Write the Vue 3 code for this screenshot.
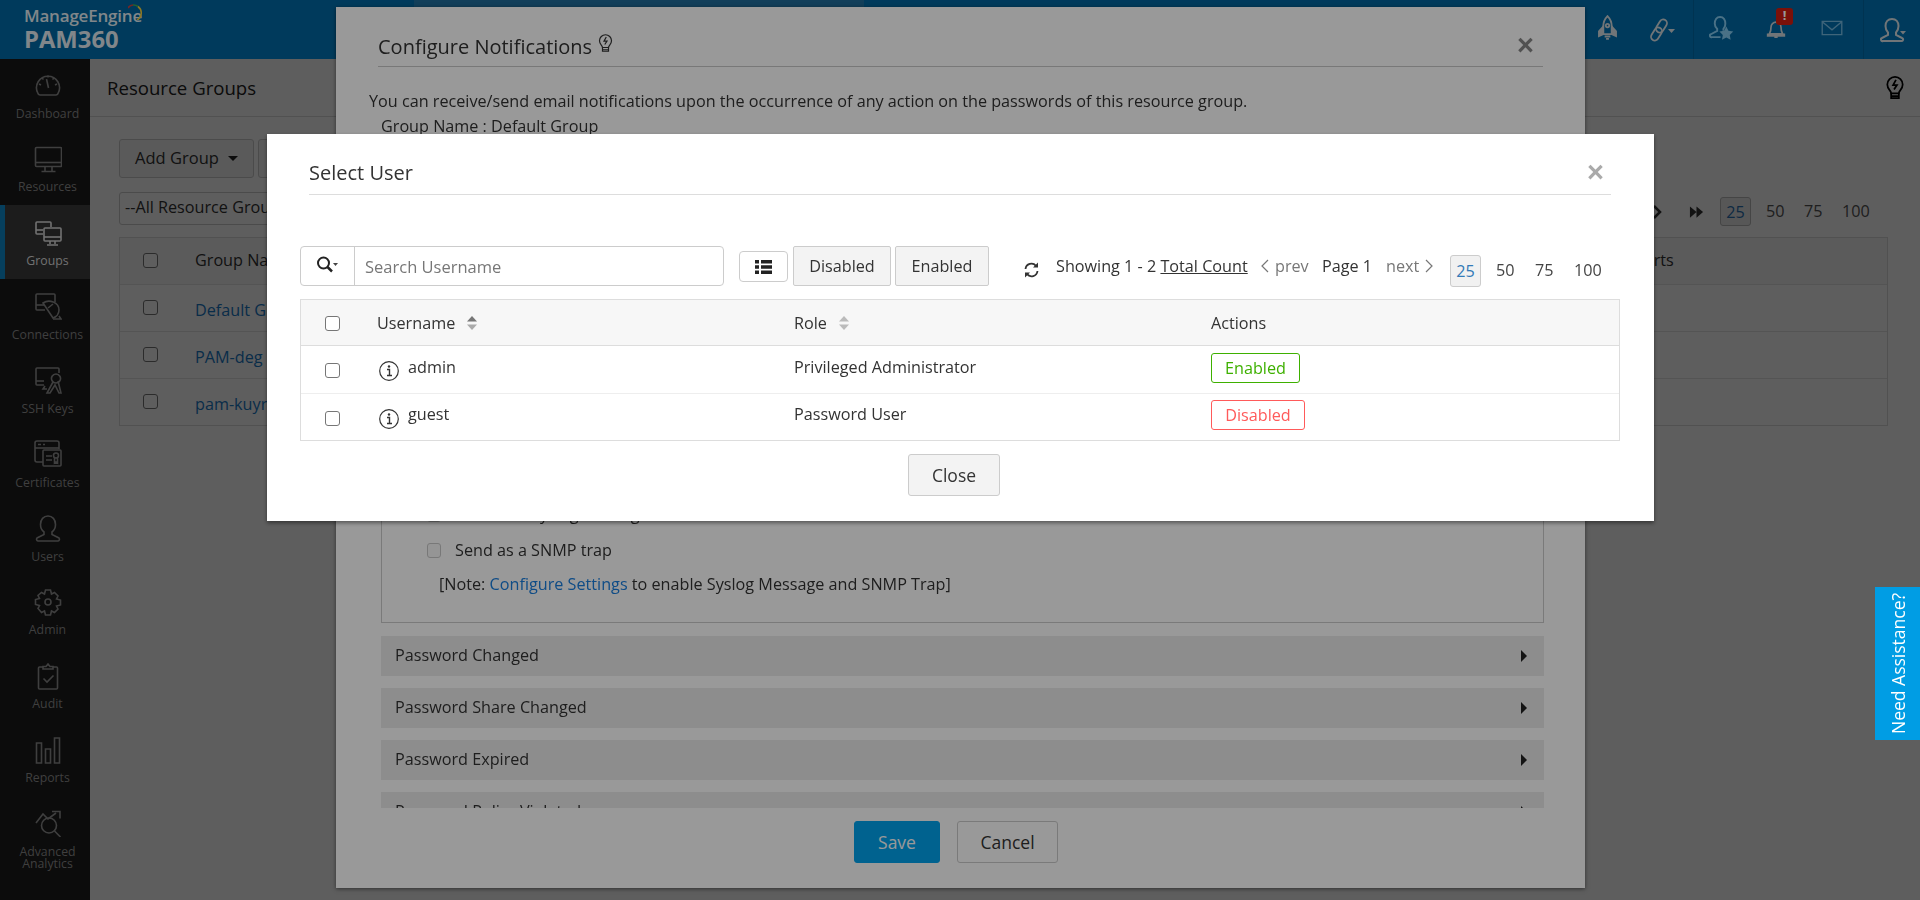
<script setup>
const nav = [
  { label: 'Dashboard', d: ['M6 24h16a2.5 2.5 0 0 0 2.2-2 A11.5 11.5 0 1 0 3.8 22 a2.5 2.5 0 0 0 2.2 2z', 'M12.5 8l2 9', 'M14 4.500v2M5 13l2 1M23 13l-2 1M8 7l1.500 1.500M20 7l-1.500 1.500'] },
  { label: 'Resources', d: ['M2.500 2.500h24a1 1 0 0 1 1 1v17a1 1 0 0 1-1 1h-24a1 1 0 0 1-1-1v-17a1 1 0 0 1 1-1z', 'M1.500 17.500h26', 'M11 22v4M18 22v4M7.500 26.500h14'] },
  { label: 'Groups', active: true, d: ['M9 15H3a1 1 0 0 1-1-1V4a1 1 0 0 1 1-1h13a1 1 0 0 1 1 1v4', 'M2 11h7', 'M11 9h15a1 1 0 0 1 1 1v11a1 1 0 0 1-1 1H11a1 1 0 0 1-1-1V10a1 1 0 0 1 1-1z', 'M10 18h17', 'M16 22v3M21 22v3M13 26h11'] },
  { label: 'Connections', d: ['M11 17H3a1 1 0 0 1-1-1V2a1 1 0 0 1 1-1h17a1 1 0 0 1 1 1v7', 'M2 12h8', 'M9 10C15 6 25 9 25 17 25 21 22 24 19 25z', 'M14 15l5-4', 'M19 26h8l-2-3'] },
  { label: 'SSH Keys', d: ['M10 19H3a1 1 0 0 1-1-1V3a1 1 0 0 1 1-1h21a1 1 0 0 1 1 1v4', 'M2 15h8', 'M11 20l-2 3h4', 'M22 8a4.500 4.500 0 1 1-.01 0z', 'M19 16l-6 11h3l5-8 4 8h2l-3-12'] },
  { label: 'Certificates', d: ['M9 22H3a2 2 0 0 1-2-2V3a2 2 0 0 1 2-2h20a2 2 0 0 1 2 2v6', 'M1 8h24', 'M4 4.500h3M9 4.500h2', 'M10 10h16a1 1 0 0 1 1 1v14a1 1 0 0 1-1 1H10a1 1 0 0 1-1-1V11a1 1 0 0 1 1-1z', 'M12 16h6M12 20h6', 'M22 13a2.500 2.500 0 1 1 0 5 2.500 2.500 0 0 1 0-5zM20.500 18v5l1.500-1 1.500 1v-5'] },
  { label: 'Users', d: ['M14 2c-4.500 0-7.500 3.500-7.500 8.500 0 3.500 1.500 6 3.500 7.500v2.500L3 24a1.800 1.800 0 0 0 1 3h20a1.800 1.800 0 0 0 1-3l-7-3.500V18c2-1.500 3.500-4 3.500-7.500C21.500 5.500 18.500 2 14 2z'] },
  { label: 'Admin', d: ['M11.500 2h5l1 4 3-1.500 3.500 3.500-1.500 3 4 1v5l-4 1 1.500 3-3.500 3.500-3-1.500-1 4h-5l-1-4-3 1.500L4 20.500l1.500-3-4-1v-5l4-1-1.500-3L7.500 4.500l3 1.500z', 'M14 11a3 3 0 1 1 0 6 3 3 0 0 1 0-6z'] },
  { label: 'Audit', d: ['M9 5H5.500a1 1 0 0 0-1 1v20a1 1 0 0 0 1 1h17a1 1 0 0 0 1-1V6a1 1 0 0 0-1-1H19', 'M9 7V4.500h3L14 2l2 2.500h3V7z', 'M9.500 16.500l3.500 3.500 6.500-6.500'] },
  { label: 'Reports', d: ['M2.500 7h5v20h-5z', 'M11.500 13h5v14h-5z', 'M20.500 2h5v25h-5z'] },
  { label: 'Advanced Analytics', d: ['M2 14l7-9 5 5 8-6', 'M18 2.500h8v7', 'M15 9a7.500 7.500 0 1 1 0 15 7.500 7.500 0 0 1 0-15z', 'M20.500 22l6 6'] },
]
const rows = ['Default Group', 'PAM-deg', 'pam-kuyruk']
const users = [
  { name: 'admin', role: 'Privileged Administrator', status: 'Enabled' },
  { name: 'guest', role: 'Password User', status: 'Disabled' },
]
const accordions = ['Password Changed', 'Password Share Changed', 'Password Expired', 'Password Policy Violated']
</script>

<template>
  <div class="app">
    <header class="topbar">
      <div class="logo">
        <div class="logo-me">ManageEngine</div>
        <div class="logo-pam">PAM360</div>
        <svg class="logo-arc" viewBox="0 0 16 16" fill="none" stroke-width="1.600">
          <path d="M0 4A6 6 0 0 1 5 1" stroke="#c04040" />
          <path d="M5 1a7 7 0 0 1 5 1.500" stroke="#3fa050" />
          <path d="M10 2.500A8 8 0 0 1 9 16" stroke="#e8c83c" />
        </svg>
      </div>
      <div class="top-strip"></div>
      <div class="top-icons">
        <svg class="ti ti-rocket" viewBox="0 0 20 26" fill="none" stroke="currentColor" stroke-width="1.900">
          <path d="M10 1c-3 3-4.500 7-4.500 11v8h9v-8C14.500 8 13 4 10 1z" />
          <path d="M5.500 12L1 17v5l4.500-2zM14.500 12L19 17v5l-4.500-2z" fill="currentColor" />
          <circle cx="10" cy="11" r="1.800" />
          <path d="M7 22.500h6M8.500 25h3" />
        </svg>
        <svg class="ti ti-wide" viewBox="0 0 26 26" fill="none" stroke="currentColor" stroke-width="1.800">
          <rect x="5.500" y="5.250" width="14" height="7.500" rx="3.750" transform="rotate(-58 12.500 9)" />
          <rect x=".5" y="13.250" width="14" height="7.500" rx="3.750" transform="rotate(-58 7.500 17)" />
          <path d="M19 12h7l-3.500 4z" fill="currentColor" stroke="none" />
        </svg>
        <i class="ti-sep sep-a"></i>
        <svg class="ti ti-star" viewBox="0 0 26 26" fill="none" stroke="currentColor" stroke-width="2"><path d="M15 16.500v-2c1.500-1.500 2-3 2-5.500 0-4-2-7-5.500-7S6 5 6 9c0 2.500 1 4 2.500 5.500v2L2 20a1.500 1.500 0 0 0 1 3h9" /><path d="M18 12l2.200 4.500 5 .7-3.600 3.500.9 5-4.500-2.400-4.500 2.400.9-5-3.600-3.500 5-.7z" fill="currentColor" stroke="none" /></svg>
        <div class="bell">
          <svg class="ti" viewBox="0 0 24 26" fill="none" stroke="currentColor" stroke-width="2"><path d="M4 20c1-2 2-3 2-8a6 6 0 0 1 12 0c0 5 1 6 2 8z" /><path d="M2 20.500h20v2H2zM10 24h4" /></svg>
          <span class="badge">!</span>
        </div>
        <svg class="ti ti-mail" viewBox="0 0 24 18" fill="none" stroke="currentColor" stroke-width="1.500"><path d="M1 1.500h22v15H1z" /><path d="M1 2l11 9 11-9" /></svg>
        <i class="ti-sep sep-b"></i>
        <svg class="ti ti-user" viewBox="0 0 26 26" fill="none" stroke="currentColor" stroke-width="2"><path d="M12 2C8 2 5.500 5 5.500 9c0 3 1 5 2.500 6.500v2.500L2 21a1.500 1.500 0 0 0 1 3h18a1.500 1.500 0 0 0 1-3l-6-3v-2.500c1.500-1.500 2.500-3.500 2.500-6.500C18.500 5 16 2 12 2z" /><path d="M20 14h6l-3 3.500z" fill="currentColor" stroke="none" /></svg>
      </div>
    </header>

    <div class="body">
      <aside class="sidebar">
        <div v-for="item in nav" :key="item.label" class="nav-item" :class="{ active: item.active }">
          <svg class="nav-icon" viewBox="0 0 28 28" fill="none" stroke="currentColor" stroke-width="1.600">
            <path v-for="p in item.d" :key="p" :d="p" />
          </svg>
          <span class="nav-label">{{ item.label }}</span>
        </div>
      </aside>

      <main class="main">
        <div class="page-title">
          <span>Resource Groups</span>
          <svg class="page-bulb" viewBox="0 0 20 26" fill="none" stroke="#000" stroke-width="1.800">
            <path d="M6 19c0-3-4-4-4-9a8 8 0 0 1 16 0c0 5-4 6-4 9z" />
            <path d="M6 19v5h8v-5M6 22h8" />
            <path d="M11 5l-3 5.500h4L9 15" />
          </svg>
        </div>
        <div class="page-content">
          <div class="actions">
            <div class="btn add">Add Group <i class="caret"></i></div>
            <div class="btn second"></div>
          </div>
          <div class="filter-row">
            <div class="select">--All Resource Groups--</div>
            <div class="page-pager">
              <svg class="pg-arrow" viewBox="0 0 10 14"><path d="M2 1l6 6-6 6" fill="none" stroke="#333" stroke-width="2.500" /></svg>
              <svg class="pg-double" viewBox="0 0 16 14" fill="#333"><path d="M1 1l7 6-7 6zM8 1l7 6-7 6z" /></svg>
              <span class="pg-box">25</span>
              <span class="pg-num">50</span>
              <span class="pg-num">75</span>
              <span class="pg-num">100</span>
            </div>
          </div>
          <div class="page-table">
            <div class="pt-row pt-head">
              <span class="cb"></span>
              <span class="pt-title">Group Name</span>
              <span class="pt-last">Reports</span>
            </div>
            <div v-for="r in rows" :key="r" class="pt-row">
              <span class="cb"></span>
              <a class="pt-link">{{ r }}</a>
            </div>
          </div>
        </div>
      </main>
    </div>

    <div class="backdrop first"></div>

    <section class="modal-config">
      <div class="cfg-head">
        <span>Configure Notifications</span>
        <svg class="cfg-bulb" viewBox="0 0 20 26" fill="none" stroke="#333" stroke-width="1.600">
          <path d="M6 19c0-3-4-4-4-9a8 8 0 0 1 16 0c0 5-4 6-4 9z" />
          <path d="M6 19v5h8v-5M6 22h8" />
          <path d="M11 5l-3 5.500h4L9 15" />
        </svg>
        <span class="x x-dim">×</span>
      </div>
      <div class="cfg-body">
        <p class="cfg-intro">You can receive/send email notifications upon the occurrence of any action on the passwords of this resource group.</p>
        <p class="cfg-group">Group Name : Default Group</p>
        <div class="fieldset">
          <label class="check-row"><span class="cb light"></span>Send as a Syslog Message</label>
          <label class="check-row"><span class="cb light"></span>Send as a SNMP trap</label>
          <p class="note">[Note: <a>Configure Settings</a> to enable Syslog Message and SNMP Trap]</p>
        </div>
        <div v-for="a in accordions" :key="a" class="accordion">
          <span>{{ a }}</span>
          <i class="acc-arrow"></i>
        </div>
      </div>
      <div class="cfg-foot">
        <div class="btn save">Save</div>
        <div class="btn cancel">Cancel</div>
      </div>
    </section>

    <div class="backdrop second-layer"></div>

    <section class="modal-user">
      <div class="mu-head">
        <span>Select User</span>
        <span class="x">×</span>
      </div>
      <div class="mu-body">
        <div class="toolbar">
          <div class="search">
            <div class="search-btn">
              <svg width="22" height="18" viewBox="0 0 22 18" fill="none" stroke="#222"><circle cx="7.500" cy="7" r="5.500" stroke-width="2" /><path d="M11.500 11l4.500 4.500" stroke-width="2.500" /><path d="M17 7h5l-2.500 3z" fill="#444" stroke="none" /></svg>
            </div>
            <input class="search-input" placeholder="Search Username" />
          </div>
          <div class="list-btn">
            <svg width="17" height="14" viewBox="0 0 17 14" fill="#222"><path d="M0 0h4v3.500H0zM6 0h11v3.500H6zM0 5.200h4v3.500H0zM6 5.200h11v3.500H6zM0 10.500h4V14H0zM6 10.500h11V14H6z" /></svg>
          </div>
          <div class="tool-btn disabled">Disabled</div>
          <div class="tool-btn enabled">Enabled</div>
          <div class="pager">
            <svg class="refresh" width="15" height="16" viewBox="0 0 15 16" fill="none" stroke="#333" stroke-width="1.800"><path d="M1.500 7a6 6 0 0 1 10.500-3.200" /><path d="M13.500 9a6 6 0 0 1-10.500 3.200" /><path d="M14 .500v5H9z" fill="#333" stroke="none" /><path d="M1 15.500v-5h5z" fill="#333" stroke="none" /></svg>
            <span class="showing">Showing 1 - 2 <u>Total Count</u></span>
            <span class="prev"><svg width="9" height="14" viewBox="0 0 9 14" fill="none" stroke="#777" stroke-width="1.200"><path d="M8 1L2 7l6 6" /></svg> prev</span>
            <span class="page-no">Page 1</span>
            <span class="next">next <svg width="9" height="14" viewBox="0 0 9 14" fill="none" stroke="#777" stroke-width="1.200"><path d="M1 1l6 6-6 6" /></svg></span>
            <span class="size active-size">25</span>
            <span class="size s50">50</span>
            <span class="size s75">75</span>
            <span class="size s100">100</span>
          </div>
        </div>

        <div class="user-table">
          <div class="ut-row ut-head">
            <span class="cb-cell"><span class="cb"></span></span>
            <span class="sort-cell">Username
              <svg class="sort" viewBox="0 0 10 16"><path d="M5 1l5 5.500H0z" fill="#777" /><path d="M5 15L0 9.500h10z" fill="#aaa" /></svg>
            </span>
            <span class="sort-cell">Role
              <svg class="sort" viewBox="0 0 10 16"><path d="M5 1l5 5.500H0z" fill="#bbb" /><path d="M5 15L0 9.500h10z" fill="#bbb" /></svg>
            </span>
            <span>Actions</span>
          </div>
          <div v-for="u in users" :key="u.name" class="ut-row">
            <span class="cb-cell"><span class="cb"></span></span>
            <span class="ut-name">
              <svg class="info" width="20" height="20" viewBox="0 0 20 20" fill="none"><circle cx="10" cy="10" r="9.300" stroke="#333" stroke-width="1.200" /><path d="M8 8.500h2.500V14M8 14.500h5" stroke="#333" stroke-width="1.400" /><circle cx="10" cy="5.500" r="1.200" fill="#333" /></svg>
              <span>{{ u.name }}</span>
            </span>
            <span class="ut-role">{{ u.role }}</span>
            <span class="ut-action"><span class="status" :class="u.status.toLowerCase()">{{ u.status }}</span></span>
          </div>
        </div>

        <div class="btn close">Close</div>
      </div>
    </section>

    <div class="help"><span>Need Assistance?</span></div>
  </div>
</template>

<style>
html, body { margin: 0; background: #fff; overflow: hidden; }
</style>

<style scoped>
.app { width: 1920px; height: 900px; overflow: hidden; font-family: "Open Sans", "Noto Sans", sans-serif; font-size: 16.200px; color: #333; background: #fff; }
p { margin: 0; }

/* top bar */
.topbar { position: relative; z-index: 20; height: 59px; background: #006299; display: flex; }
.logo { position: relative; width: 200px; padding: 6px 0 0 24px; box-sizing: border-box; color: #d8e0e6; }
.logo-me { font-size: 17px; font-weight: 600; line-height: 19px; letter-spacing: -.2px; }
.logo-pam { font-size: 23.800px; font-weight: 700; line-height: 28px; }
.logo-arc { position: absolute; left: 128px; top: 4px; width: 16px; height: 16px; }
.top-strip { position: absolute; left: 414px; top: 0; width: 450px; height: 7px; background: #1e6996; }
.top-icons { position: absolute; inset: 0; color: #bcc4c8; }
.ti { position: absolute; }
.ti-rocket { left: 1598px; top: 15px; width: 19px; height: 25px; }
.ti-wide { left: 1649px; top: 17px; width: 26px; height: 26px; }
.ti-star { left: 1709px; top: 15px; width: 25px; height: 25px; color: #7cbde0; }
.ti-mail { left: 1821px; top: 20px; width: 22px; height: 16px; color: #6aa8cc; }
.ti-user { left: 1880px; top: 17px; width: 26px; height: 26px; }
.ti-sep { position: absolute; top: 0; width: 1px; height: 59px; background: #005587; }
.sep-a { left: 1693px; }
.sep-b { left: 1863px; }
.bell { position: absolute; left: 1766px; top: 0; width: 40px; height: 59px; }
.bell .ti { left: 0; top: 17px; width: 20px; height: 22px; }
.badge { position: absolute; left: 10px; top: 8px; width: 17px; height: 17px; border-radius: 3px; background: #cc1c10; color: #fff; font-size: 13px; font-weight: 700; line-height: 14px; text-align: center; }

/* sidebar */
.body { display: flex; height: 841px; }
.sidebar { position: relative; z-index: 20; width: 90px; flex: none; background: #141414; color: #6a6a6a; }
.nav-item { height: 73.850px; display: flex; flex-direction: column; align-items: center; padding: 14px 0 0 5px; box-sizing: border-box; }
.nav-item:first-child { height: 71.850px; padding-top: 12px; }
.nav-item.active { background: #303030; box-shadow: inset 5px 0 0 #0a6a9c; color: #bdbdbd; }
.nav-icon { width: 28px; height: 28px; flex: none; }
.nav-label { font-size: 12.300px; line-height: 12.500px; margin-top: 8.500px; text-align: center; }

/* base page */
.main { flex: 1; min-width: 0; }
.page-title { height: 57px; border-bottom: 1px solid #dcdcdc; padding: 0 17px; display: flex; align-items: center; justify-content: space-between; font-size: 18.600px; color: #222; }
.page-bulb { width: 20px; height: 25px; margin-right: -2px; }
.page-content { padding: 22px 32px 0 29px; }
.actions { display: flex; gap: 4px; }
.btn { box-sizing: border-box; display: flex; align-items: center; justify-content: center; border: 1px solid #ccc; border-radius: 3px; background: #f5f5f5; }
.add { width: 135px; height: 39px; padding-bottom: 2px; font-size: 16.500px; gap: 9px; color: #333; }
.second { width: 200px; height: 39px; }
.caret { width: 0; height: 0; margin-top: 2px; border: 5px solid transparent; border-top-color: #222; border-bottom: 0; }
.filter-row { display: flex; justify-content: space-between; margin-top: 14px; }
.select { box-sizing: border-box; width: 240px; height: 33px; border: 1px solid #ccc; border-radius: 3px; padding-left: 5px; line-height: 29px; font-size: 16.200px; white-space: nowrap; overflow: hidden; }
.page-pager { display: flex; align-items: center; height: 29px; margin-top: 5px; margin-right: 19px; }
.pg-arrow { width: 10px; height: 14px; }
.pg-double { width: 15px; height: 14px; margin-left: 27px; margin-right: 16px; }
.pg-box { box-sizing: border-box; width: 31px; height: 29px; border: 1px solid #bbb; border-radius: 3px; background: #eee; color: #2a72b5; text-align: center; line-height: 29px; }
.pg-num { margin-left: 15px; color: #555; width: 18px; margin-top: -2px; }
.pg-num + .pg-num { margin-left: 20px; }
.pg-num:last-child { width: 27px; }
.page-table { margin-top: 11px; border: 1px solid #ddd; }
.pt-row { position: relative; height: 47px; box-sizing: border-box; display: flex; align-items: center; padding-left: 23px; border-top: 1px solid #e5e5e5; gap: 37px; }
.pt-head { height: 46px; background: #f7f7f7; border-top: 0; }
.pt-head .cb { margin-top: -2px; }
.pt-row:not(.pt-head) .cb { margin-top: -2px; }
.pt-title { margin-top: -2px; }
.pt-link { margin-top: 4px; color: #1a7ac7; }
.pt-last { position: absolute; left: 1495px; margin-top: -2px; }

.cb { display: inline-block; box-sizing: border-box; width: 15px; height: 15px; border: 1px solid #767676; border-radius: 3px; background: #fff; flex: none; }
.cb.light { width: 14px; border-color: #c8c8c8; background: #f8f8f8; }

/* overlays */
.backdrop { position: fixed; inset: 0; }
.backdrop.first { z-index: 10; background: rgba(0, 0, 0, .385); }
.backdrop.second-layer { z-index: 40; background: rgba(0, 0, 0, .4); }

/* configure notifications modal */
.modal-config { position: fixed; z-index: 30; left: 336px; top: 7px; width: 1249px; height: 881px; background: #fff; box-shadow: 0 1px 4px rgba(0, 0, 0, .5); display: flex; flex-direction: column; }
.cfg-head { position: relative; flex: none; height: 60px; box-sizing: border-box; margin: 0 42px; border-bottom: 1px solid #c8c8c8; display: flex; align-items: center; font-size: 20px; padding-top: 19px; }
.cfg-bulb { width: 15px; height: 20px; margin: -6px 0 0 6px; }
.x { position: absolute; font-weight: 700; color: #aaa; font-size: 29px; line-height: 26px; font-family: "Liberation Sans", sans-serif; }
.x-dim { right: 9px; top: 25px; color: #888; }
.cfg-body { flex: none; height: 741px; overflow: hidden; padding: 22px 41px 0 33px; box-sizing: border-box; }
.cfg-intro { line-height: 24px; }
.cfg-group { line-height: 24px; padding-left: 12px; margin-top: 1px; }
.fieldset { margin-top: 5px; margin-left: 12px; height: 480px; box-sizing: border-box; border: 1px solid #ccc; display: flex; flex-direction: column; justify-content: flex-end; padding-bottom: 26px; padding-left: 45px; }
.check-row { display: flex; align-items: center; gap: 14px; height: 36px; }
.note { padding-left: 12px; margin-top: 4px; line-height: 24px; }
.note a { color: #1a7fe0; }
.accordion { margin: 13px 0 0 12px; height: 40px; background: #ebebeb; display: flex; align-items: center; justify-content: space-between; padding: 0 17px 2px 14px; box-sizing: border-box; }
.accordion + .accordion { margin-top: 12px; }
.acc-arrow { width: 0; height: 0; margin-top: 2px; border: 6px solid transparent; border-left: 6px solid #222; border-right: 0; }
.cfg-foot { flex: none; padding: 13px 0 0 518px; display: flex; gap: 17px; }
.save { width: 86px; height: 42px; background: #00a3ee; border-color: #00a3ee; color: #fff; font-size: 17.500px; }
.cancel { width: 101px; height: 42px; background: #fff; font-size: 17.500px; }

/* select user modal */
.modal-user { position: fixed; z-index: 50; left: 267px; top: 134px; width: 1387px; height: 387px; background: #fff; box-shadow: 0 2px 4px rgba(0, 0, 0, .45); }
.mu-head { position: relative; height: 61px; box-sizing: border-box; margin: 0 43px 0 42px; border-bottom: 1px solid #ddd; display: flex; align-items: center; font-size: 20px; color: #333; padding-top: 16px; }
.mu-head .x { right: 7px; top: 25px; }
.mu-body { padding: 51px 34px 0 33px; }
.toolbar { display: flex; align-items: flex-start; height: 40px; }
.search { box-sizing: border-box; width: 424px; height: 40px; border: 1px solid #ccc; border-radius: 4px; display: flex; }
.search-btn { width: 54px; flex: none; box-sizing: border-box; border-right: 1px solid #ccc; padding: 9px 0 0 15px; }
.search-input { flex: 1; min-width: 0; border: 0; outline: 0; padding: 0 10px; font: inherit; font-size: 16.500px; background: transparent; }
.search-input::placeholder { color: #777; opacity: 1; }
.list-btn { margin: 5px 0 0 15px; box-sizing: border-box; width: 49px; height: 31px; border: 1px solid #ccc; border-radius: 4px; display: flex; align-items: center; justify-content: center; }
.tool-btn { box-sizing: border-box; height: 40px; line-height: 38px; text-align: center; background: #f3f3f3; border: 1px solid #ccc; border-radius: 2px; }
.disabled.tool-btn { width: 98px; margin-left: 5px; }
.enabled.tool-btn { width: 94px; margin-left: 4px; }
.pager { position: relative; flex: 1; height: 32px; margin-top: 9px; }
.pager > * { position: absolute; top: -3px; line-height: 28px; white-space: nowrap; }
.pager .refresh { left: 35px; top: 7px; }
.showing { left: 67px; }
.prev { left: 271px; color: #777; display: flex; align-items: center; gap: 6px; }
.page-no { left: 333px; }
.next { left: 397px; color: #777; display: flex; align-items: center; gap: 6px; }
.pager .size { top: -1px; color: #444; line-height: 32px; }
.pager .active-size { top: 0; left: 461px; box-sizing: border-box; width: 31px; height: 32px; border: 1px solid #ccc; border-radius: 3px; background: #f1f1f1; color: #337ab7; text-align: center; line-height: 31px; }
.s50 { left: 507px; }
.s75 { left: 546px; }
.s100 { left: 585px; }

.user-table { margin-top: 13px; border: 1px solid #ddd; }
.ut-row { display: grid; grid-template-columns: 76px 417px 417px 1fr; align-items: center; height: 47px; box-sizing: border-box; border-top: 1px solid #eee; }
.ut-head { height: 46px; background: #f7f7f7; border-top: 0; border-bottom: 1px solid #ddd; }
.ut-head + .ut-row { border-top: 0; }
.cb-cell { padding: 2px 0 0 24px; display: flex; }
.sort-cell { display: flex; align-items: center; gap: 12px; }
.sort { width: 10px; height: 16px; }
.ut-name { display: flex; align-items: center; gap: 9px; }
.info { margin: 3px 0 0 2px; }
.ut-name span { margin-top: -6px; }
.ut-role { margin-top: -6px; }
.ut-action { margin-top: -4px; }
.status { display: inline-flex; align-items: center; justify-content: center; box-sizing: border-box; height: 30px; border: 1px solid; border-radius: 3px; }
.status.enabled { width: 89px; color: #3eb000; border-color: #3eb000; }
.status.disabled { width: 94px; color: #ff5a5a; border-color: #ff5a5a; }
.close { margin: 13px 0 0 608px; width: 92px; height: 42px; background: #f3f3f3; font-size: 17.500px; }

.help { position: fixed; z-index: 60; right: 0; top: 587px; width: 45px; height: 153px; background: #009de4; color: #fff; display: flex; align-items: center; justify-content: center; }
.help span { writing-mode: vertical-rl; transform: rotate(180deg); font-size: 17.500px; white-space: nowrap; font-family: "Open Sans", sans-serif; }
</style>
